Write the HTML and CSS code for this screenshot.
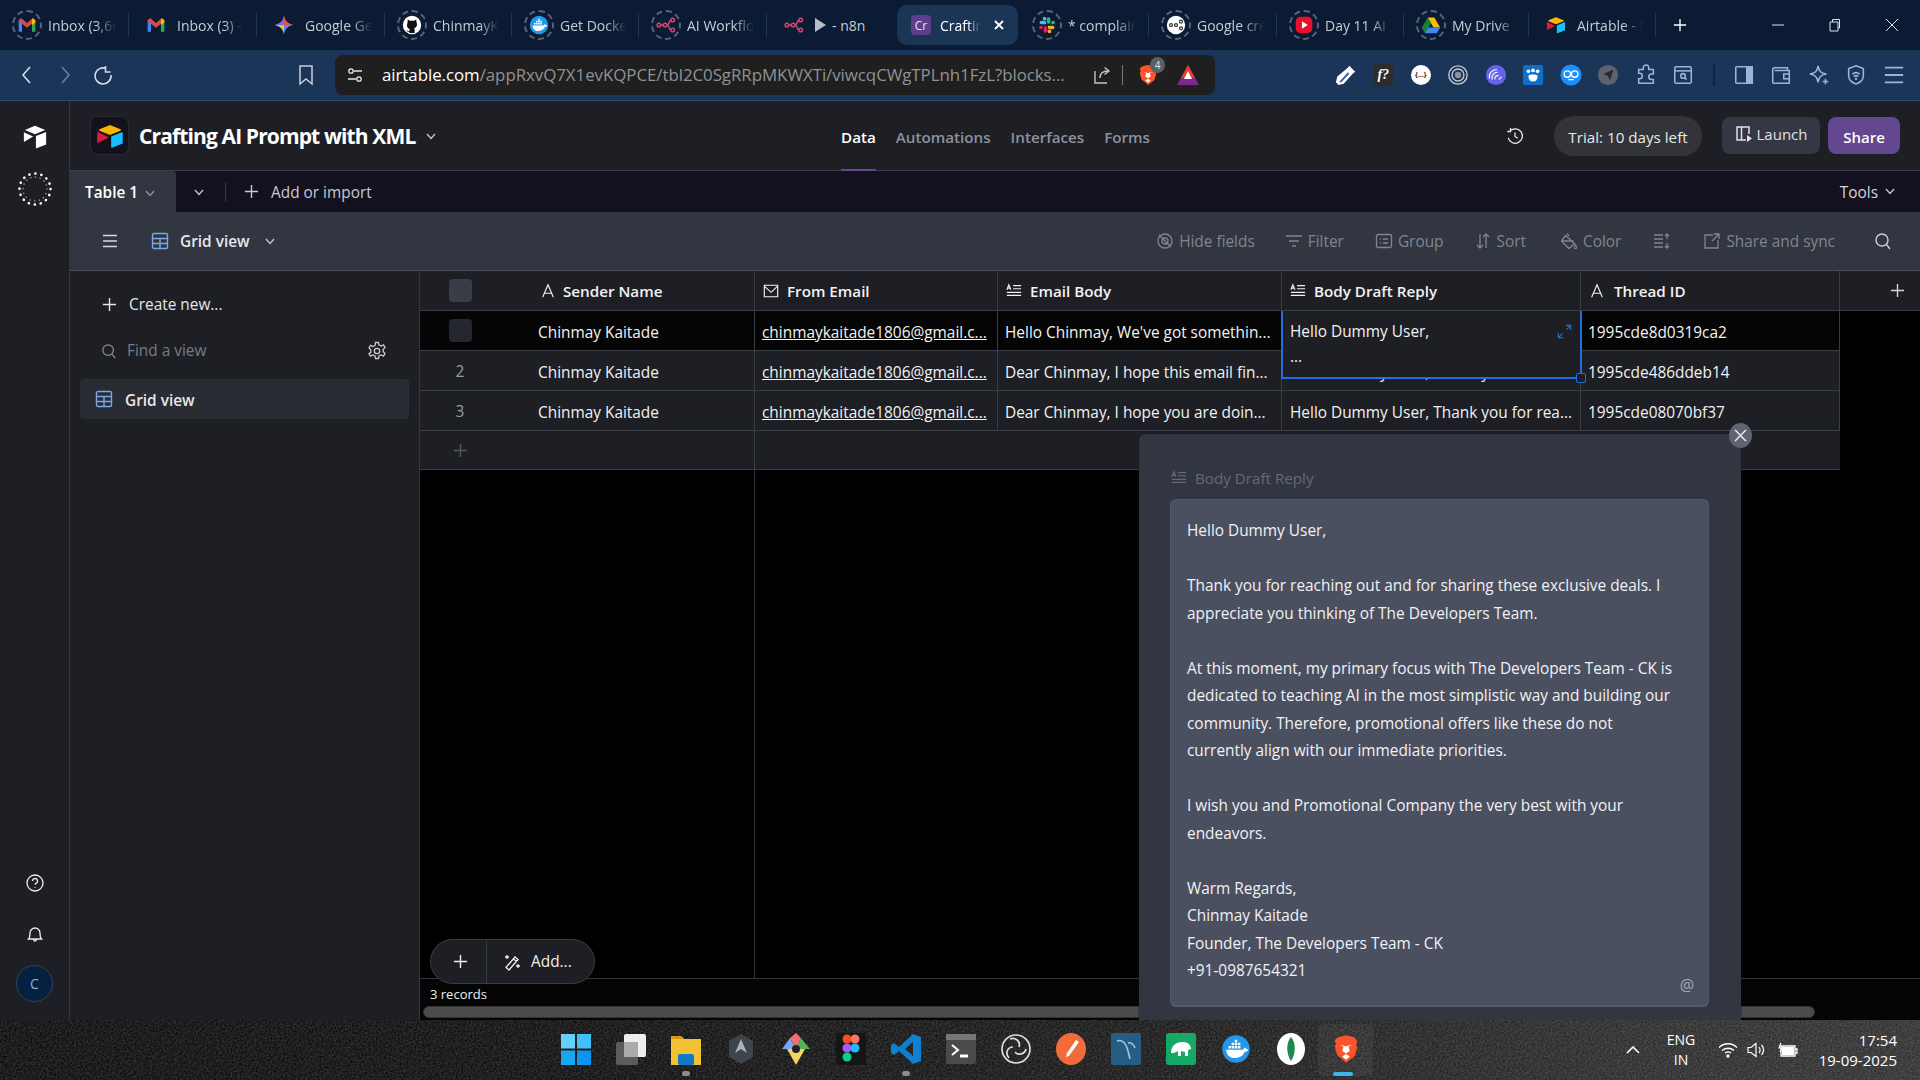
FILE: index.html
```html
<!DOCTYPE html>
<html lang="en">
<head>
<meta charset="utf-8">
<title>Crafting AI Prompt with XML - Airtable</title>
<link rel="stylesheet" href="styles.css">
</head>
<body>
<svg class="defs" width="0" height="0">
  <symbol id="gmail" viewBox="0 0 24 24"><path d="M2 20V6l3-2 7 6V15L6 10.5V20H3.500A1.500 1.500 0 0 1 2 20z" fill="#4285f4"/><path d="M22 20V6l-3-2-7 6V15l6-4.500V20h2.500A1.500 1.500 0 0 0 22 20z" fill="#34a853"/><path d="M2 6.500 5 4l7 6 7-6 3 2.500L12 15z" fill="#ea4335"/><path d="M19 4l3 2.500V9l-4 3V6z" fill="#fbbc04"/></symbol>
  <symbol id="gem" viewBox="0 0 24 24"><path d="M12 1c1 6 5 10 11 11-6 1-10 5-11 11-1-6-5-10-11-11 6-1 10-5 11-11z" fill="#4c8df6"/><path d="M12 1c1 6 5 10 11 11H12z" fill="#e8503f"/><path d="M12 23c-1-6-5-10-11-11h11z" fill="#f7b92f"/><path d="M12 1C11 7 7 11 1 12h11z" fill="#7e62e8"/></symbol>
  <symbol id="gh" viewBox="0 0 24 24"><circle cx="12" cy="12" r="11" fill="#fff"/><path d="M7 5.500l2.500 1.500h5L17 5.500 17.500 9c1 2.500.5 6-3 7 .5.500.7 1.200.7 2v3.500H8.800V20c-2.500.5-3-1-3.800-2 1 0 1.500 1 2.500 1.200h1.300c0-.8.200-1.700.7-2.200-3.500-1-4-4.500-3-7z" fill="#111"/></symbol>
  <symbol id="docker" viewBox="0 0 24 24"><circle cx="12" cy="12" r="11" fill="#2396ed"/><path d="M4 12.500h13c1 0 1.500-.8 1.500-1.800 1 .1 1.500.7 1.700 1.300.8 0 1.300.1 1.800.5-1 1.500-2 1.700-3 1.700-1 3-4 5-8 5-4 0-6.500-2.500-7-6.700z" fill="#fff"/><path d="M6 9.500h2v2H6zm2.500 0h2v2h-2zm2.500 0h2v2h-2zm2.500 0h2v2h-2zM8.500 7h2v2h-2zM11 7h2v2h-2zm2.500 0h2v2h-2zM11 4.500h2v2h-2z" fill="#fff"/></symbol>
  <symbol id="flow" viewBox="0 0 24 24"><g fill="none" stroke="#d8457a" stroke-width="1.700"><circle cx="3.500" cy="12" r="2.200"/><circle cx="11" cy="12" r="2.200"/><circle cx="20" cy="6" r="2.200"/><circle cx="20" cy="18" r="2.200"/><path d="M5.700 12h3M13.200 12c3 0 2-5 4.600-6M13.200 12c3 0 2 5 4.600 6"/></g></symbol>
  <symbol id="slack" viewBox="0 0 24 24"><path d="M9 2a2.200 2.200 0 0 0 0 4.400h2.200V4.200A2.200 2.200 0 0 0 9 2zM3 9a2.200 2.200 0 0 0 2.200 2.200h5.800V9A2.200 2.200 0 0 0 9 7H5.200A2.200 2.200 0 0 0 3 9z" fill="#36c5f0"/><path d="M21.500 9a2.200 2.200 0 0 0-4.400 0v2.200h2.200A2.200 2.200 0 0 0 21.500 9zM16 9V4.200a2.200 2.200 0 0 0-4.200 0V9a2.200 2.200 0 0 0 4.200 0z" fill="#2eb67d"/><path d="M15 22a2.200 2.200 0 0 0 0-4.400h-2.200v2.200A2.200 2.200 0 0 0 15 22zM21 15a2.200 2.200 0 0 0-2.200-2.200H13V15a2.200 2.200 0 0 0 2.200 2.200h3.600A2.200 2.200 0 0 0 21 15z" fill="#ecb22e"/><path d="M2.500 15a2.200 2.200 0 0 0 4.400 0v-2.200H4.700A2.200 2.200 0 0 0 2.500 15zM8 15v4.800a2.200 2.200 0 0 0 4.200 0V15A2.200 2.200 0 0 0 8 15z" fill="#e01e5a"/></symbol>
  <symbol id="gcr" viewBox="0 0 24 24"><circle cx="12" cy="12" r="11" fill="#fff"/><g fill="none" stroke="#333" stroke-width="1.500"><circle cx="6" cy="12" r="1.800"/><circle cx="12" cy="12" r="1.800"/><circle cx="18" cy="8" r="1.800"/><circle cx="18" cy="16" r="1.800"/></g></symbol>
  <symbol id="yt" viewBox="0 0 24 24"><rect x="2" y="2" width="20" height="20" rx="6" fill="#e8112d"/><path d="M9.500 7.500l7 4.500-7 4.500z" fill="#fff"/></symbol>
  <symbol id="drive" viewBox="0 0 24 24"><path d="M8 3h8l7 12h-8z" fill="#fbbc04"/><path d="M1 15h22l-4 7H5z" fill="#4285f4"/><path d="M8 3l4 7-7 12-4-7z" fill="#188038"/></symbol>
  <symbol id="air" viewBox="0 0 24 24"><path d="M11 3 3 6.300c-.5.200-.5.900 0 1.100L11 10.700c.7.300 1.300.3 2 0l8-3.300c.5-.2.500-.9 0-1.100L13 3c-.7-.3-1.300-.3-2 0z" fill="#fcb400"/><path d="M13 12.800v8.700c0 .4.400.7.800.5l8.600-3.400c.3-.1.500-.4.500-.7V9.300c0-.4-.4-.7-.8-.5l-8.600 3.400c-.3.100-.5.300-.5.600z" fill="#18bfff"/><path d="M1.600 8.500C1.300 8.400 1 8.600 1 9v8.300c0 .4.500.7.900.5l8.500-4.200c.3-.2.300-.6 0-.8z" fill="#e0173f"/></symbol>
  <symbol id="chev" viewBox="0 0 12 12"><path d="M2 4l4 4.500L10 4" fill="none" stroke="currentColor" stroke-width="1.300"/></symbol>
  <symbol id="plus" viewBox="0 0 16 16"><path d="M8 1v14M1 8h14" fill="none" stroke="currentColor" stroke-width="1.500"/></symbol>
  <symbol id="gridv" viewBox="0 0 18 18"><path d="M1.500 3a1.500 1.500 0 0 1 1.500-1.500h12a1.500 1.500 0 0 1 1.500 1.500v12a1.500 1.500 0 0 1-1.500 1.500H3A1.500 1.500 0 0 1 1.500 15zM1.500 6.500h15M1.500 11.500h15M9 6.500v10" fill="none" stroke="#7aa7e8" stroke-width="1.400"/></symbol>
  <symbol id="burger" viewBox="0 0 18 18"><path d="M2 3.500h14M2 9h14M2 14.500h14" fill="none" stroke="currentColor" stroke-width="1.600"/></symbol>
  <symbol id="search" viewBox="0 0 18 18"><path d="M8 2a6 6 0 1 0 0 12A6 6 0 0 0 8 2zM12.500 12.500 16 17" fill="none" stroke="currentColor" stroke-width="1.400"/></symbol>
  <symbol id="fa" viewBox="0 0 18 18"><path d="M3 16 9 2l6 14M5 11.500h8" fill="none" stroke="currentColor" stroke-width="1.300"/></symbol>
  <symbol id="fl" viewBox="0 0 18 18"><path d="M1 7.500 3.200 2l2.300 5.500M1.800 5.800h3M8 3h9M8 6.500h9M1 10.500h16M1 14h16" fill="none" stroke="currentColor" stroke-width="1.300"/></symbol>
  <symbol id="fe" viewBox="0 0 18 18"><path d="M1.500 2.500h15v13h-15zM1.500 3.500 9 10.500l7.500-7" fill="none" stroke="currentColor" stroke-width="1.300"/></symbol>
  <symbol id="share" viewBox="0 0 20 20"><path d="M3 6v12h12M8 13c0-5 3-7 8-7M12.500 2.500 17 6l-4.500 3.500" fill="none" stroke="currentColor" stroke-width="1.400"/></symbol>
  <symbol id="puzzle" viewBox="0 0 24 24"><path d="M9 4a3 3 0 0 1 6 0v2h5v5h-2a3 3 0 0 0 0 6h2v4H4v-5h1a3 3 0 0 0 0-6H4V6h5z" fill="none" stroke="currentColor" stroke-width="1.700"/></symbol>
  <symbol id="brave" viewBox="0 0 24 24"><path d="M12 1l4 1 3 1 2 2.500-1 3 1 2-2 7-4.500 3.500L12 23l-2.500-2.500L5 17l-2-7 1-2-1-3L5 3l3-1z" fill="#fb542b"/><path d="M12 16l-3 2 3 2.500 3-2.500zM7 9l3 1-1 3.500 3 2 3-2-1-3.500 3-1-3 .2L12 10l-2-.8z" fill="#fff"/></symbol>
</svg>

<header class="tabstrip">
  <div class="tab"><span class="ring"><svg class="fav"><use href="#gmail"/></svg></span><span class="tt">Inbox (3,664) - chin</span></div>
  <div class="tab"><span class="noring"><svg class="fav"><use href="#gmail"/></svg></span><span class="tt">Inbox (3) - chinmay</span></div>
  <div class="tab"><span class="noring"><svg class="fav"><use href="#gem"/></svg></span><span class="tt">Google Gemini</span></div>
  <div class="tab tab-n"><span class="ring"><svg class="fav"><use href="#gh"/></svg></span><span class="tt">ChinmayKaitade</span></div>
  <div class="tab tab-n"><span class="ring"><svg class="fav"><use href="#docker"/></svg></span><span class="tt">Get Docker | Docker</span></div>
  <div class="tab"><span class="ring"><svg class="fav"><use href="#flow"/></svg></span><span class="tt">AI Workflow Automation</span></div>
  <div class="tab tab-last"><span class="noring"><svg class="fav"><use href="#flow"/></svg></span><span class="tt tt-full"><i class="play"></i>- n8n</span></div>
  <div class="tab tab-active"><span class="cr">Cr</span><span class="tt">Crafting</span><svg class="tab-x" viewBox="0 0 10 10"><path d="M1 1l8 8M9 1l-8 8"/></svg></div>
  <div class="tab tab-next"><span class="ring"><svg class="fav"><use href="#slack"/></svg></span><span class="tt">* complaints</span></div>
  <div class="tab"><span class="ring"><svg class="fav"><use href="#gcr"/></svg></span><span class="tt">Google credentials</span></div>
  <div class="tab tab-n"><span class="ring"><svg class="fav"><use href="#yt"/></svg></span><span class="tt">Day 11 AI Agents</span></div>
  <div class="tab tab-s"><span class="ring"><svg class="fav"><use href="#drive"/></svg></span><span class="tt">My Drive - Google</span></div>
  <div class="tab tab-n"><span class="noring"><svg class="fav"><use href="#air"/></svg></span><span class="tt">Airtable - Everything</span></div>
  <svg class="newtab"><use href="#plus"/></svg>
  <div class="winctl">
    <svg class="wc" viewBox="0 0 14 14"><path d="M1 7h12"/></svg>
    <svg class="wc" viewBox="0 0 14 14"><path d="M2 4h8v9H2zM4.500 4V1.500h7V10H10"/></svg>
    <svg class="wc" viewBox="0 0 14 14"><path d="M1 1l12 12M13 1 1 13"/></svg>
  </div>
</header>

<nav class="toolbar">
  <div class="navbtns">
    <svg class="nb" viewBox="0 0 20 20"><path d="M13 2 6 10l7 8"/></svg>
    <svg class="nb nb-dim" viewBox="0 0 20 20"><path d="M7 2l7 8-7 8"/></svg>
    <svg class="nb" viewBox="0 0 20 20"><path d="M13 3.500A8 8 0 1 0 18 10M12.500 1v6h5" /></svg>
  </div>
  <svg class="bm" viewBox="0 0 16 22"><path d="M2 2h12v18l-6-5-6 5z"/></svg>
  <div class="omni">
    <svg class="tune" viewBox="0 0 18 18"><circle cx="5" cy="5" r="2.200"/><circle cx="13" cy="13" r="2.200"/><path d="M8 5h8M2 13h8"/></svg>
    <span class="url"><b>airtable.com</b>/appRxvQ7X1evKQPCE/tbl2C0SgRRpMKWXTi/viwcqCWgTPLnh1FzL?blocks...</span>
    <svg class="omni-share"><use href="#share"/></svg>
    <span class="omni-div"></span>
    <span class="brave-wrap"><svg class="brave"><use href="#brave"/></svg><span class="bcount">4</span></span>
    <svg class="bat" viewBox="0 0 24 24"><path d="M12 2 23 22H1z" fill="#7a2a8c"/><path d="M12 2 19 15H5z" fill="#ef3b24"/><path d="M12 8l4 8H8z" fill="#fff"/></svg>
  </div>
  <div class="exts">
    <span class="ext"><svg viewBox="0 0 24 24"><path d="M14 4l1.500-2 6.500 6.500-2 1.500-1 1-9.500 10.500L4 23l-3-3 1.500-6.500L13 5z" fill="#fff"/><path d="M5 19l9-10 1.500 1.500-9 10z" fill="#3f5fa8"/></svg></span>
    <span class="ext"><span class="fq">f?</span></span>
    <span class="ext"><span class="dots">{...}</span></span>
    <span class="ext"><svg viewBox="0 0 24 24" fill="none" stroke="#c4c9d0"><circle cx="12" cy="12" r="10" stroke-width="1.500"/><circle cx="12" cy="12" r="6.500" stroke-width="1.500"/><circle cx="12" cy="12" r="3.500" fill="#8c929c" stroke="none"/></svg></span>
    <span class="ext"><svg viewBox="0 0 24 24" fill="none"><circle cx="12" cy="12" r="11" fill="#6563e8"/><path d="M5 16a8 8 0 0 1 8-10M8 17a6 6 0 0 1 6-8M11 17a3 3 0 0 1 4-4M15 17l3-3" stroke="#fff" stroke-width="1.200"/></svg></span>
    <span class="ext"><svg viewBox="0 0 24 24"><rect x="1" y="1" width="22" height="22" rx="2" fill="#0d6fc9"/><circle cx="7" cy="8" r="2" fill="#fff"/><circle cx="12" cy="7" r="2" fill="#fff"/><circle cx="17" cy="8" r="2" fill="#fff"/><path d="M7 13c0-2 10-2 10 0 0 4-2 6-5 6s-5-2-5-6z" fill="#fff"/></svg></span>
    <span class="ext"><svg viewBox="0 0 24 24" fill="none"><circle cx="12" cy="12" r="11.500" fill="#1890ff"/><circle cx="8" cy="11" r="3.500" stroke="#fff" stroke-width="1.500"/><circle cx="16" cy="11" r="3.500" stroke="#fff" stroke-width="1.500"/><path d="M9 17h6" stroke="#fff" stroke-width="1.500"/></svg></span>
    <span class="ext"><svg viewBox="0 0 24 24"><circle cx="12" cy="12" r="11" fill="#5e636b"/><path d="M18 6l-4 12-2-5-5-2z" fill="#222a36"/></svg></span>
    <span class="ext ext-line"><svg><use href="#puzzle"/></svg></span>
    <span class="ext ext-line"><svg viewBox="0 0 24 24" fill="none" stroke="currentColor" stroke-width="1.700"><rect x="3" y="3" width="18" height="18" rx="1.500"/><path d="M3 7.500h18"/><circle cx="12" cy="13" r="2.500"/><path d="M14 15l2 2"/></svg></span>
    <span class="ext-div"></span>
    <span class="ext ext-line"><svg viewBox="0 0 24 24" fill="none" stroke="currentColor" stroke-width="1.700"><rect x="3" y="3" width="18" height="18" rx="1"/><path d="M15 3h6v18h-6z" fill="currentColor"/></svg></span>
    <span class="ext ext-line"><svg viewBox="0 0 24 24" fill="none" stroke="currentColor" stroke-width="1.700"><path d="M19 7V4H5a2 2 0 0 0-2 2v14a1 1 0 0 0 1 1h17V7H5"/><path d="M21 11h-6v5h6"/></svg></span>
    <span class="ext ext-line"><svg viewBox="0 0 24 24" fill="none" stroke="currentColor" stroke-width="1.700"><path d="M11 2c1 6 3 8 9 9-6 1-8 3-9 9-1-6-3-8-9-9 6-1 8-3 9-9zM19 16v6M16 19h6"/></svg></span>
    <span class="ext ext-line"><svg viewBox="0 0 24 24" fill="none" stroke="currentColor" stroke-width="1.700"><path d="M12 2l8 3v8c0 5-4 7-8 9-4-2-8-4-8-9V5zM8 11c2.500-2 5.500-2 8 0M9.500 13.500c1.500-1 3.500-1 5 0"/><circle cx="12" cy="16" r=".5"/></svg></span>
    <span class="ext ext-line"><svg viewBox="0 0 24 24" fill="none" stroke="currentColor" stroke-width="2"><path d="M2 4h20M2 12h20M2 20h20"/></svg></span>
  </div>
</nav>

<div class="app">
  <aside class="rail">
    <svg class="rail-logo" viewBox="0 0 28 28"><path d="M14 2 25 6.500 14 11 3 6.500z" fill="#fff"/><path d="M15 13l11-4.500V22l-11 4.500z" fill="#fff"/><path d="M2 9l10 4.500L2 19.500z" fill="#fff"/></svg>
    <svg class="rail-spin" viewBox="0 0 34 34" fill="none" stroke-linecap="round"><circle cx="17" cy="17" r="15.500" stroke="#fff" stroke-width="2.600" stroke-dasharray=".1 5.980"/><circle cx="17" cy="17" r="12" stroke="#9a9ca3" stroke-width="1.500" stroke-dasharray=".1 4.620"/></svg>
    <div class="rail-bottom">
      <svg class="rail-ic" viewBox="0 0 20 20" fill="none" stroke="currentColor" stroke-width="1.300"><circle cx="10" cy="10" r="8"/><path d="M7.500 8a2.500 2.500 0 1 1 3.500 2.300c-.7.300-1 .8-1 1.500M10 14v.8"/></svg>
      <svg class="rail-ic" viewBox="0 0 20 20" fill="none" stroke="currentColor" stroke-width="1.300"><path d="M3.500 15c1.500-1.500 1.500-3 1.500-6a5 5 0 0 1 10 0c0 3 0 4.500 1.500 6zM8.500 15.500a1.500 1.500 0 0 0 3 0"/></svg>
      <span class="avatar">C</span>
    </div>
  </aside>
  <main class="work">
    <div class="hdr">
      <div class="hdr-left">
        <span class="baseico"><svg><use href="#air"/></svg></span>
        <span class="basename">Crafting AI Prompt with XML</span>
        <svg class="chev-s chev-base"><use href="#chev"/></svg>
      </div>
      <div class="hnav">
        <span class="hn hn-on">Data</span><span class="hn">Automations</span><span class="hn">Interfaces</span><span class="hn">Forms</span>
      </div>
      <div class="hdr-right">
        <svg class="hist" viewBox="0 0 20 20" fill="none" stroke="currentColor" stroke-width="1.400"><path d="M5 4a8 8 0 1 1-2.500 8M5 1v4H1.500M10 6v4.500l3 2"/></svg>
        <span class="trial">Trial: 10 days left</span>
        <span class="launch"><svg viewBox="0 0 18 18" fill="none" stroke="currentColor" stroke-width="1.500"><path d="M11 15H2V2h12v7M6.500 2v13"/><path d="M12 10l5 3.500-5 3.500z" fill="currentColor" stroke="none"/></svg>Launch</span>
        <span class="sharebtn">Share</span>
      </div>
    </div>
    <div class="tabsrow">
      <span class="t1">Table 1<svg class="chev-s"><use href="#chev"/></svg></span>
      <svg class="chev-s chev-all"><use href="#chev"/></svg>
      <span class="tdiv"></span>
      <svg class="plus-s"><use href="#plus"/></svg>
      <span class="addimp">Add or import</span>
      <span class="tools">Tools<svg class="chev-s"><use href="#chev"/></svg></span>
    </div>
    <div class="viewbar">
      <svg class="vb-burger"><use href="#burger"/></svg>
      <svg class="vb-grid"><use href="#gridv"/></svg>
      <span class="vb-name">Grid view</span>
      <svg class="chev-s vb-chev"><use href="#chev"/></svg>
      <div class="vb-tools">
        <span class="vt vt-hide"><svg viewBox="0 0 18 18"><path d="M9 2a7 7 0 1 0 0 14A7 7 0 0 0 9 2zM6 9a3 3 0 1 0 6 0 3 3 0 0 0-6 0zM3 3l12 12"/></svg>Hide fields</span>
        <span class="vt vt-filter"><svg viewBox="0 0 18 18"><path d="M1 4h16M4 9h10M7 14h4"/></svg>Filter</span>
        <span class="vt vt-group"><svg viewBox="0 0 18 18"><rect x="1.500" y="2.500" width="15" height="13" rx="1.500"/><path d="M5 7h1M8 7h5M5 11h1M8 11h5"/></svg>Group</span>
        <span class="vt vt-sort"><svg viewBox="0 0 18 18"><path d="M6 2v14M3 13l3 3 3-3M12 16V2M9 5l3-3 3 3"/></svg>Sort</span>
        <span class="vt vt-color"><svg viewBox="0 0 18 18"><path d="M7 1.500 9 4M5.500 3.500l9 8-5.500 5L1.500 9zM1.500 9h12M15.500 13c-1 1.500-1.500 2-1 3 .4.700 1.600.7 2 0 .5-1 0-1.500-1-3z"/></svg>Color</span>
        <span class="vt vt-rows"><svg viewBox="0 0 18 18"><path d="M2 3h9M2 7h9M2 11h9M2 15h9M15 2v5M15 11v5M13 4l2-2 2 2M13 14l2 2 2-2"/></svg></span>
        <span class="vt vt-sync"><svg viewBox="0 0 18 18"><path d="M10 3H2v13h13V8M9 9l7-7M11 2h5v5"/></svg>Share and sync</span>
      </div>
      <svg class="vb-search"><use href="#search"/></svg>
    </div>
    <div class="split">
      <section class="side">
        <div class="s-create"><svg><use href="#plus"/></svg>Create new...</div>
        <div class="s-find"><svg class="s-mag"><use href="#search"/></svg><span>Find a view</span><svg class="s-gear" viewBox="0 0 20 20" fill="none" stroke="currentColor" stroke-width="1.300"><path d="M8.500 1.500h3l.5 2.500 2.200 1 2.300-1.200 1.500 2.600-1.800 1.800v2.600l1.800 1.800-1.500 2.600-2.300-1.200-2.200 1-.5 2.500h-3l-.5-2.500-2.200-1-2.300 1.200-1.500-2.600L3.800 11.300V8.700L2 6.900l1.500-2.600L5.800 5.500 8 4.500z"/><circle cx="10" cy="10" r="2.700"/></svg></div>
        <div class="s-item"><svg><use href="#gridv"/></svg><span>Grid view</span></div>
      </section>
      <section class="gridarea">
        <div class="row row-h">
          <div class="c c-n"><span class="chk"></span></div>
          <div class="c c-name"><svg><use href="#fa"/></svg>Sender Name</div>
          <div class="c c-mail"><svg><use href="#fe"/></svg>From Email</div>
          <div class="c c-body"><svg><use href="#fl"/></svg>Email Body</div>
          <div class="c c-draft"><svg><use href="#fl"/></svg>Body Draft Reply</div>
          <div class="c c-id"><svg><use href="#fa"/></svg>Thread ID</div>
          <svg class="addcol"><use href="#plus"/></svg>
        </div>
        <div class="row row-hover">
          <div class="c c-n"><span class="chk chk-dim"></span></div>
          <div class="c c-name">Chinmay Kaitade</div>
          <div class="c c-mail"><u>chinmaykaitade1806@gmail.c...</u></div>
          <div class="c c-body">Hello Chinmay, We've got somethin...</div>
          <div class="c c-draft"></div>
          <div class="c c-id">1995cde8d0319ca2</div>
        </div>
        <div class="row">
          <div class="c c-n">2</div>
          <div class="c c-name">Chinmay Kaitade</div>
          <div class="c c-mail"><u>chinmaykaitade1806@gmail.c...</u></div>
          <div class="c c-body">Dear Chinmay, I hope this email fin...</div>
          <div class="c c-draft">Hello Dummy User, Thank you for rea...</div>
          <div class="c c-id">1995cde486ddeb14</div>
        </div>
        <div class="row">
          <div class="c c-n">3</div>
          <div class="c c-name">Chinmay Kaitade</div>
          <div class="c c-mail"><u>chinmaykaitade1806@gmail.c...</u></div>
          <div class="c c-body">Dear Chinmay, I hope you are doin...</div>
          <div class="c c-draft">Hello Dummy User, Thank you for rea...</div>
          <div class="c c-id">1995cde08070bf37</div>
        </div>
        <div class="row row-add"><div class="add-left"><svg><use href="#plus"/></svg></div></div>
        <div class="fill"><div class="fill-left"></div></div>
        <div class="gfoot">
          <div class="records">3 records</div>
          <div class="hscroll"></div>
        </div>

        <div class="selcell">
          <div>Hello Dummy User,</div>
          <div class="sel2">...</div>
          <svg class="expand" viewBox="0 0 16 16"><path d="M9.500 1.500h5v5M14.500 1.500 10 6M6.500 14.500h-5v-5M1.500 14.500 6 10"/></svg>
          <span class="handle"></span>
        </div>
        <div class="addpill">
          <span class="ap-plus"><svg><use href="#plus"/></svg></span>
          <span class="ap-add"><svg viewBox="0 0 18 18" fill="none" stroke="currentColor" stroke-width="1.300"><path d="M3 14.500 12 4l3 2.500-9 10.500zM10.500 6l3 2.500M4 2v4M2 4h4M15 11v4M13 13h4"/></svg>Add...</span>
        </div>
      </section>
    </div>
    <div class="panel">
      <span class="closebtn"><svg viewBox="0 0 12 12"><path d="M1 1l10 10M11 1 1 11"/></svg></span>
      <div class="p-label"><svg><use href="#fl"/></svg>Body Draft Reply</div>
      <div class="p-box">
        <p>Hello Dummy User,</p>
        <p>Thank you for reaching out and for sharing these exclusive deals. I<br>appreciate you thinking of The Developers Team.</p>
        <p>At this moment, my primary focus with The Developers Team - CK is<br>dedicated to teaching AI in the most simplistic way and building our<br>community. Therefore, promotional offers like these do not<br>currently align with our immediate priorities.</p>
        <p>I wish you and Promotional Company the very best with your<br>endeavors.</p>
        <p>Warm Regards,<br>Chinmay Kaitade<br>Founder, The Developers Team - CK<br>+91-0987654321</p>
        <span class="at">@</span>
      </div>
    </div>
  </main>
</div>

<footer class="taskbar">
  <svg class="noise"><filter id="grain"><feTurbulence type="fractalNoise" baseFrequency="0.55" numOctaves="2"/><feColorMatrix values="0 0 0 0 1  0 0 0 0 1  0 0 0 0 1  0 0 0 0.28 -0.06"/></filter><rect width="100%" height="100%" filter="url(#grain)"/></svg>
  <div class="apps">
    <span class="app-i"><svg viewBox="0 0 30 32"><rect y="1" width="14" height="14.500" fill="#62d0fa"/><rect x="16" y="1" width="14" height="14.500" fill="#3fc0f8"/><rect y="17.500" width="14" height="14.500" fill="#18a8f2"/><rect x="16" y="17.500" width="14" height="14.500" fill="#0b95ee"/></svg></span>
    <span class="app-i"><svg viewBox="0 0 30 32"><rect y="9" width="22" height="23" rx="2" fill="#5c5c5c"/><rect x="8" y="1" width="22" height="23" rx="2" fill="#eee"/><rect x="8" y="9" width="14" height="15" fill="#aaa"/></svg></span>
    <span class="app-i"><svg viewBox="0 0 30 32"><path d="M0 3h10l3 3h17v26H0z" fill="#f2c234"/><path d="M0 3h10l3 3H0z" fill="#d99a12"/><rect x="7" y="21" width="16" height="11" rx="2" fill="#1279c9"/></svg><i class="app-dot"></i></span>
    <span class="app-i"><svg viewBox="0 0 30 32"><path d="M15 1 27 8v16l-12 7-12-7V8z" fill="#3f444b"/><path d="M15 6l6 14-6-4-6 4z" fill="#a9b4bf"/></svg></span>
    <span class="app-i"><svg viewBox="0 0 30 32"><path d="M15 16 1 16 9 5z" fill="#7aa7f5"/><path d="M15 16 9 5 15 0l5 5z" fill="#ef6f72"/><path d="M15 16 20 5l9 11z" fill="#55b25b"/><path d="M15 16H6l9 16 9-16z" fill="#f4d35e"/><circle cx="15" cy="16" r="4" fill="#222"/></svg></span>
    <span class="app-i"><svg viewBox="0 0 30 32"><rect width="30" height="32" rx="2" fill="#151515"/><circle cx="11" cy="6" r="4.500" fill="#f24e1e"/><circle cx="19" cy="6" r="4.500" fill="#ff7262"/><circle cx="11" cy="15" r="4.500" fill="#a259ff"/><circle cx="19" cy="15" r="4.500" fill="#1abcfe"/><circle cx="11" cy="24" r="4.500" fill="#0acf83"/></svg></span>
    <span class="app-i"><svg viewBox="0 0 30 32"><path d="M22 1 30 4v24l-8 3L8 18l-5 4-3-2V12l3-2 5 4zM22 9l-8 7 8 7z" fill="#0f7fcf"/></svg><i class="app-dot"></i></span>
    <span class="app-i"><svg viewBox="0 0 30 32"><rect y="1" width="30" height="30" rx="2" fill="#4a4a4a"/><rect y="1" width="30" height="6" fill="#777"/><path d="M6 12l6 5-6 5" fill="none" stroke="#fff" stroke-width="2"/><path d="M14 23h8" stroke="#fff" stroke-width="3"/></svg></span>
    <span class="app-i"><svg viewBox="0 0 30 32" fill="none" stroke="#ddd" stroke-width="1.700"><circle cx="15" cy="16" r="14"/><path d="M9 6c5-2 11 2 9 8M25 16c-1 5-8 7-11 3M8 25c-4-4-2-11 4-11"/></svg></span>
    <span class="app-i"><svg viewBox="0 0 30 32"><ellipse cx="15" cy="16" rx="15" ry="16" fill="#f26b3a"/><path d="M20 7l3 2-10 14-3 1 1-4z" fill="#fff"/></svg></span>
    <span class="app-i"><svg viewBox="0 0 30 32"><rect width="30" height="32" rx="2" fill="#255d85"/><path d="M6 8c5-2 9 2 11 10l2 8M17 10c3-1 6 2 7 5" fill="none" stroke="#a9c7db" stroke-width="1.600"/></svg></span>
    <span class="app-i"><svg viewBox="0 0 30 32"><rect width="30" height="32" rx="3" fill="#17a866"/><path d="M5 20c0-8 6-11 12-11 5 0 8 3 8 7l-3 1v6h-3v-4l-4-1v5h-3v-5l-4 2z" fill="#fff"/></svg></span>
    <span class="app-i"><svg class="a-round"><use href="#docker"/></svg></span>
    <span class="app-i"><svg viewBox="0 0 30 32"><ellipse cx="15" cy="16" rx="14" ry="16" fill="#fff"/><path d="M15 4c5 5 5 17 0 24-5-7-5-19 0-24z" fill="#1c8a4c"/></svg></span>
    <span class="app-i app-on"><svg class="a-brave"><use href="#brave"/></svg><i class="app-bar"></i></span>
  </div>
  <div class="tray">
    <svg class="tr-up" viewBox="0 0 14 8"><path d="M1 7l6-6 6 6"/></svg>
    <div class="lang">ENG<br>IN</div>
    <svg class="tr-w" viewBox="0 0 20 16" fill="none" stroke="#fff" stroke-width="1.300"><path d="M1 5.500c5-5 13-5 18 0M4 8.500c3.500-3 8.500-3 12 0M7 11c2-1.500 4-1.500 6 0"/><circle cx="10" cy="14" r="1" fill="#fff"/></svg>
    <svg class="tr-v" viewBox="0 0 20 16" fill="none" stroke="#fff" stroke-width="1.200"><path d="M1 5.500h3L9 1.500v13L4 10.500H1zM12 5c1.500 2 1.500 4 0 6M14.500 3c2.500 3 2.500 7 0 10"/></svg>
    <svg class="tr-b" viewBox="0 0 20 16" fill="none" stroke="#fff" stroke-width="1.300"><path d="M3 4h14v10H3zM17 7h2v4h-2z"/><path d="M4 5h12v8H4z" fill="#fff" stroke="none"/><path d="M3 1 1 6h3l-2 4" stroke-width="1.200"/></svg>
    <div class="clock">17:54<br>19-09-2025</div>
  </div>
</footer>
</body>
</html>
```
FILE: styles.css
```css
* { box-sizing: border-box; }
html, body { margin: 0; height: 100%; overflow: hidden; }
body { display: flex; flex-direction: column; width: 1920px; height: 1080px; background: #000; color: #fff; font-family: "Open Sans", "Noto Sans", sans-serif; font-size: 15.400px; }
.defs { position: absolute; }
svg { display: block; flex: none; }

/* tab strip */
.tabstrip { height: 50px; background: #0a1b33; display: flex; align-items: center; font-size: 14px; color: #c6ccd6; }
.tab { width: 128px; height: 24px; display: flex; align-items: center; border-right: 1px solid #24364f; flex: none; padding-left: 12px; }
.tab:first-child { width: 129px; }
.tab-n { width: 127px; }
.tab-s { width: 125px; }
.tab-last { width: 130px; border-right: 0; }
.tab-next { width: 129px; margin-left: 2px; }
.ring, .noring { width: 30px; height: 30px; flex: none; display: flex; align-items: center; justify-content: center; margin-right: 6px; border-radius: 50%; }
.ring { border: 2px dashed #56657a; }
.fav { width: 20px; height: 20px; }
.tt { white-space: nowrap; overflow: hidden; flex: 1; margin-right: 12px; -webkit-mask-image: linear-gradient(90deg, #000 70%, transparent 100%); mask-image: linear-gradient(90deg, #000 70%, transparent 100%); }
.tt-full { -webkit-mask-image: none; mask-image: none; overflow: visible; display: flex; align-items: center; gap: 6px; }
.play { width: 0; height: 0; border-left: 11px solid #b9bfc9; border-top: 7px solid transparent; border-bottom: 7px solid transparent; }
.tab-active { width: 121px; height: 40px; background: #1b3556; border: 0; border-radius: 10px; padding-left: 14px; color: #fff; }
.cr { width: 20px; height: 20px; flex: none; background: #5b3f8c; border-radius: 4px; font-size: 12px; display: flex; align-items: center; justify-content: center; margin-right: 9px; color: #e8e3f5; }
.tab-active .tt { margin-right: 14px; }
.tab-x { width: 10px; height: 10px; margin-right: 14px; fill: none; stroke: #fff; stroke-width: 1.800; }
.newtab { width: 14px; height: 14px; color: #fff; margin-left: 17px; }
.winctl { display: flex; margin-left: auto; margin-right: 21px; gap: 43px; }
.wc { width: 14px; height: 14px; fill: none; stroke: #dfe3e8; stroke-width: 1; }

/* toolbar */
.toolbar { height: 51px; padding-bottom: 1px; background: #1a3558; border-bottom: 1px solid #2d4a70; display: flex; align-items: center; }
.navbtns { display: flex; gap: 18px; margin-left: 17px; }
.nb { width: 20px; height: 20px; fill: none; stroke: #d5dbe4; stroke-width: 1.600; }
.nb-dim { stroke: #6b7f99; }
.bm { width: 16px; height: 22px; margin-left: 185px; fill: none; stroke: #c7ced9; stroke-width: 1.500; }
.omni { width: 880px; height: 40px; margin-left: 21px; background: #1f1f1f; border-radius: 8px; display: flex; align-items: center; padding-left: 11px; color: #8f9296; }
.tune { width: 18px; height: 18px; fill: none; stroke: #e8e8e8; stroke-width: 1.300; margin-right: 18px; }
.url { font-size: 16.900px; white-space: nowrap; width: 706px; overflow: hidden; letter-spacing: -.06px; }
.url b { font-weight: 400; color: #fff; }
.omni-share { width: 20px; height: 20px; color: #c4c4c4; margin-left: 4px; }
.omni-div { width: 1px; height: 20px; background: #777; margin-left: 10px; }
.brave-wrap { position: relative; margin-left: 14px; }
.brave { width: 22px; height: 24px; }
.bcount { position: absolute; left: 13px; top: -6px; width: 15px; height: 16px; border-radius: 50%; background: #5b5f66; color: #e5e5e5; font-size: 10px; display: flex; align-items: center; justify-content: center; }
.bat { width: 24px; height: 24px; margin-left: 17px; }
.exts { display: flex; align-items: center; margin-left: 112px; }
.ext { width: 37.500px; display: flex; align-items: center; justify-content: center; flex: none; }
.ext svg { width: 22px; height: 22px; }
.ext-line { color: #9db3d6; }
.fq { width: 20px; height: 22px; background: #2c2c2c; color: #fff; font: italic 700 14px "Liberation Serif", serif; display: flex; align-items: center; justify-content: center; border-radius: 2px; }
.dots { width: 20px; height: 20px; border-radius: 50%; background: #fff; color: #222; font-size: 7px; font-weight: 700; display: flex; align-items: center; justify-content: center; }
.ext-div { width: 2px; height: 22px; background: #0f2340; margin: 0 10px 0 11px; }

/* app */
.app { height: 919px; display: flex; background: #1e1f25; }
.rail { width: 70px; flex: none; border-right: 1px solid #34363d; display: flex; flex-direction: column; align-items: center; padding-top: 23px; }
.rail-logo { width: 28px; height: 26px; }
.rail-spin { width: 34px; height: 34px; margin-top: 22px; }
.rail-bottom { margin-top: auto; margin-bottom: 18px; display: flex; flex-direction: column; align-items: center; }
.rail-ic { width: 20px; height: 20px; color: #eee; margin-bottom: 31px; }
.rail-ic + .avatar { margin-top: -10px; }
.avatar { width: 37px; height: 37px; border-radius: 50%; background: #06203f; border: 1px solid #34415a; color: #7fb2ee; display: flex; align-items: center; justify-content: center; font-size: 14px; }
.work { flex: 1; display: flex; flex-direction: column; position: relative; min-width: 0; }

.hdr { height: 70px; flex: none; display: flex; align-items: center; border-bottom: 1px solid #3b3d44; }
.hdr-left { width: 771px; display: flex; align-items: center; padding-left: 20px; }
.baseico { width: 39px; height: 39px; background: #14111f; border: 1px solid #2a2833; border-radius: 8px; display: flex; align-items: center; justify-content: center; }
.baseico svg { width: 28px; height: 28px; }
.basename { font-size: 21px; font-weight: 700; margin-left: 10px; letter-spacing: -.87px; white-space: nowrap; }
.chev-s { width: 12px; height: 12px; color: #c5c8cf; }
.chev-base { margin-left: 10px; }
.hnav { display: flex; gap: 20px; height: 70px; align-items: center; font-size: 15.200px; color: #8c929d; font-weight: 600; }
.hn { height: 70px; line-height: 72px; }
.hn-on { color: #fff; border-bottom: 2px solid #63478f; }
.hdr-right { margin-left: auto; display: flex; align-items: center; padding-right: 20px; }
.hist { width: 18px; height: 18px; color: #eee; margin-right: 30px; }
.trial { width: 148px; height: 40px; border-radius: 20px; background: #323439; display: flex; align-items: center; justify-content: center; color: #e8e8e8; font-size: 15.200px; padding-top: 2px; margin-right: 20px; }
.launch { width: 98px; height: 37px; border-radius: 8px; background: #353844; display: flex; align-items: center; justify-content: center; gap: 4px; color: #dfe1e6; font-size: 15px; padding-bottom: 3px; }
.launch svg { width: 18px; height: 18px; }
.sharebtn { width: 72px; height: 37px; border-radius: 8px; background: #63478f; margin-left: 8px; display: flex; align-items: center; justify-content: center; font-weight: 600; font-size: 15px; padding-top: 2px; }

.tabsrow { height: 41px; flex: none; background: #13101f; display: flex; align-items: center; }
.t1 { width: 106px; height: 41px; background: #323640; display: flex; align-items: center; gap: 6px; padding: 2px 0 0 15px; font-weight: 600; border-top-right-radius: 3px; }
.t1 .chev-s { color: #8f95a1; }
.chev-all { margin-left: 17px; }
.tdiv { width: 1px; height: 20px; background: #3a3842; margin-left: 20px; }
.plus-s { width: 15px; height: 15px; color: #c5c8cf; margin-left: 18px; }
.addimp { margin-left: 12px; padding-top: 2px; color: #c8cad0; }
.tools { margin-left: auto; margin-right: 24px; padding-top: 2px; display: flex; align-items: center; gap: 6px; color: #d3d5da; }
.tools .chev-s { margin-top: -3px; }

.viewbar { height: 59px; flex: none; background: #323640; border-bottom: 1px solid #4a4d55; display: flex; align-items: center; padding-right: 28px; }
.vb-burger { width: 18px; height: 18px; color: #d7dae0; margin-left: 31px; }
.vb-grid { width: 18px; height: 18px; margin-left: 32px; }
.vb-name { margin-left: 11px; font-weight: 600; color: #e6e8ec; }
.vb-chev { margin-left: 14px; }
.vb-tools { display: flex; align-items: center; margin-left: auto; color: #7f8591; }
.vt { display: flex; align-items: center; gap: 5px; white-space: nowrap; }
.vt svg { width: 18px; height: 18px; fill: none; stroke: currentColor; stroke-width: 1.300; }
.vt + .vt { margin-left: 30px; }
.vt.vt-group { margin-left: 31px; }
.vt.vt-color { margin-left: 34px; }
.vt.vt-rows { margin-left: 31px; }
.vt.vt-sync { margin-left: 33px; }
.vb-search { width: 18px; height: 18px; color: #ccd0d6; margin-left: 39px; }

.split { flex: 1; display: flex; min-height: 0; }
.side { width: 350px; flex: none; padding: 0 10px; border-right: 1px solid #34363d; }
.s-create { height: 66px; display: flex; align-items: center; color: #e6e6e6; padding: 0 0 0 22px; gap: 12px; }
.s-create svg { width: 15px; height: 15px; }
.s-find { height: 43px; display: flex; align-items: center; color: #777c87; padding-left: 21px; margin-top: -8px; }
.s-find span { margin-left: 10px; }
.s-mag { width: 16px; height: 16px; color: #8a8f99; }
.s-gear { width: 20px; height: 20px; color: #ccc; margin-left: auto; margin-right: 22px; }
.s-item { height: 40px; margin-top: 7px; background: #2a2c33; border-radius: 4px; display: flex; align-items: center; gap: 12px; padding-left: 15px; font-weight: 600; color: #e8e8e8; }
.s-item span { padding-top: 2px; }
.s-item svg { width: 18px; height: 18px; }

.gridarea { flex: 1; background: #000; position: relative; display: flex; flex-direction: column; min-width: 0; }
.row { height: 40px; flex: none; display: flex; width: 1420px; background: #1e1f25; border-bottom: 1px solid #3b3d44; color: #f2f2f2; }
.row-h { width: 100%; font-weight: 600; position: relative; }
.row-hover { background: #050505; }
.c { display: flex; align-items: center; white-space: nowrap; overflow: hidden; padding: 3px 0 0 7px; gap: 8px; height: 39px; }
.c svg { width: 16px; height: 16px; margin-top: -3px; }
.c-n { width: 80px; justify-content: center; padding: 1px 0 0; color: #9a9da5; }
.c-name { width: 255px; padding-left: 38px; border-right: 1px solid #3b3d44; }
.c-mail { width: 243px; border-right: 1px solid #3b3d44; }
.c-body { width: 284px; border-right: 1px solid #3b3d44; }
.c-draft { width: 299px; padding-left: 8px; border-right: 1px solid #3b3d44; }
.c-id { width: 259px; border-right: 1px solid #3b3d44; }
.row-h .c { font-size: 15.200px; padding-top: 1px; padding-left: 8px; }
.row-h .c svg { margin-top: -1px; }
.row-h .c-n { padding-left: 0; }
.row-h .c-name { padding-left: 40px; gap: 7px; }
.row-h .c-id { gap: 9px; }
.chk { width: 23px; height: 23px; margin-top: -1px; border-radius: 4px; background: #3a3d47; }
.chk-dim { background: #25272e; }
.addcol { position: absolute; right: 15px; top: 12px; width: 15px; height: 15px; color: #d5d7dc; }
.row-add { height: 39px; }
.add-left { width: 335px; height: 38px; border-right: 1px solid #3b3d44; display: flex; align-items: center; padding-left: 33px; color: #55585f; }
.add-left svg { width: 15px; height: 15px; }
.fill { flex: 1; min-height: 0; }
.fill-left { width: 335px; height: 100%; border-right: 1px solid #33353b; }
.gfoot { height: 42px; flex: none; background: #050505; border-top: 1px solid #33353b; }
.records { font-size: 13px; height: 27px; line-height: 30px; padding-left: 10px; color: #eee; }
.hscroll { width: 1392px; height: 12px; margin-left: 3px; background: #4b4b4b; border: 1px solid #333; border-radius: 6px; }

.selcell { position: absolute; left: 861px; top: 40px; width: 301px; height: 68px; background: #1e1f25; border: 2px solid #1f6fe0; border-top-width: 0; padding: 8px 0 0 7px; color: #f2f2f2; line-height: 25px; }
.expand { position: absolute; right: 8px; top: 13px; width: 15px; height: 15px; fill: none; stroke: #1f6fe0; stroke-width: 1.300; }
.handle { position: absolute; right: -6px; bottom: -6px; width: 10px; height: 10px; background: #1e1f25; border: 1.500px solid #1f6fe0; border-radius: 2px; }
.addpill { position: absolute; left: 10px; top: 668px; width: 165px; height: 45px; border-radius: 23px; background: #1e1f25; border: 1px solid #3a3c43; display: flex; align-items: center; color: #eee; }
.ap-plus { width: 56px; height: 100%; padding-left: 3px; border-right: 1px solid #3a3c43; display: flex; align-items: center; justify-content: center; }
.ap-plus svg { width: 15px; height: 15px; }
.ap-add { display: flex; align-items: center; gap: 10px; padding-left: 16px; }
.ap-add svg { width: 18px; height: 18px; }

.panel { position: absolute; left: 1069px; top: 333px; width: 602px; height: 586px; background: #323640; border-radius: 6px 6px 0 0; padding: 0 32px 0 31px; box-shadow: 0 0 0 1px rgba(0,0,0,.2); }
.closebtn { position: absolute; right: -11px; top: -11px; width: 23px; height: 25px; border-radius: 50%; background: #5f6470; display: flex; align-items: center; justify-content: center; }
.closebtn svg { width: 13px; height: 13px; fill: none; stroke: #eee; stroke-width: 1.300; }
.p-label { height: 65px; padding: 22px 0 0 1px; display: flex; align-items: center; gap: 8px; color: #646a76; font-size: 15.200px; }
.p-label svg { width: 16px; height: 16px; }
.p-box { position: relative; height: 508px; background: #4b5060; border-radius: 6px; border: 1px solid #545969; border-bottom: 2px solid #565b6b; padding: 17px 16px; line-height: 27.500px; color: #f1f2f4; white-space: nowrap; }
.p-box p { margin: 0 0 27.500px; }
.at { position: absolute; right: 14px; bottom: 10px; color: #a5a8b2; font-size: 16px; line-height: 20px; }

/* taskbar */
.taskbar { height: 60px; flex: none; position: relative; display: flex; align-items: center; background: linear-gradient(90deg, #0a0a0a 0%, #0d0d0d 30%, #171717 60%, #2a2a2a 85%, #2f2f2f 100%); overflow: hidden; }
.noise { position: absolute; inset: 0; width: 100%; height: 100%; }
.apps { position: relative; margin-left: 548px; display: flex; height: 100%; }
.app-i { width: 55px; height: 60px; display: flex; align-items: center; justify-content: center; position: relative; padding-bottom: 2px; }
.app-i svg { width: 30px; height: 32px; }
.app-on { background: rgba(255,255,255,.05); height: 52px; margin-top: 4px; border-radius: 5px; }
.app-dot { position: absolute; left: 24px; bottom: 4px; width: 8px; height: 5px; border-radius: 3px; background: #8d8d8d; }
.app-bar { position: absolute; left: 15px; bottom: 0; width: 20px; height: 4px; border-radius: 2px; background: #3ab5f0; }
.tray { position: absolute; right: 0; top: 0; height: 60px; width: 300px; display: flex; align-items: center; color: #fff; line-height: 20px; }
.tr-up { width: 14px; height: 8px; margin-left: 6px; fill: none; stroke: #fff; stroke-width: 1.600; }
.lang { width: 40px; text-align: center; margin-left: 21px; font-size: 14px; }
.tr-w { width: 20px; height: 16px; margin-left: 17px; }
.tr-v { width: 20px; height: 16px; margin-left: 9px; }
.tr-b { width: 20px; height: 16px; margin-left: 11px; }
.clock { margin-left: auto; margin-right: 23px; text-align: right; font-size: 15px; }
```
